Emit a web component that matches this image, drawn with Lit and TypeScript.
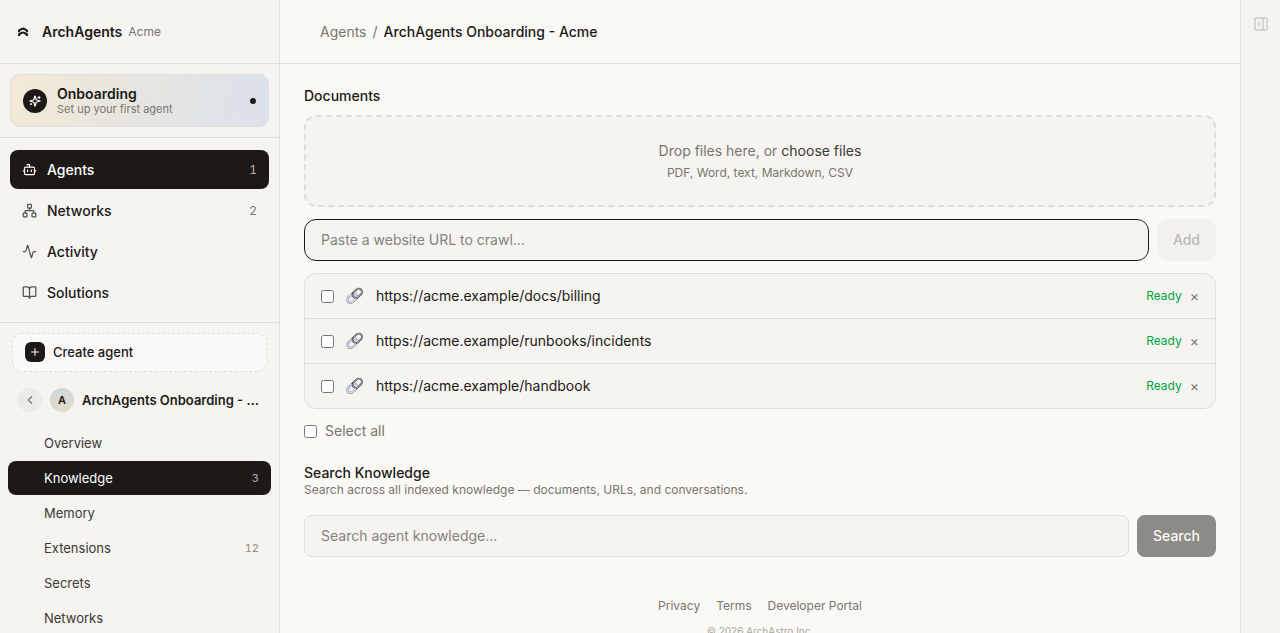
import { LitElement, html, css, svg, nothing, type TemplateResult } from "lit";
import { customElement, property } from "lit/decorators.js";
import { classMap } from "lit/directives/class-map.js";

interface NavItem {
  label: string;
  icon?: unknown;
  count?: number;
  active?: boolean;
}

const icons = {
  bot: svg`<path d="M12 8V4H8"/><rect width="16" height="12" x="4" y="8" rx="2"/><path d="M2 14h2M20 14h2M15 13v2M9 13v2"/>`,
  network: svg`<rect x="16" y="16" width="6" height="6" rx="1"/><rect x="2" y="16" width="6" height="6" rx="1"/><rect x="9" y="2" width="6" height="6" rx="1"/><path d="M5 16v-3a1 1 0 0 1 1-1h12a1 1 0 0 1 1 1v3M12 12V8"/>`,
  activity: svg`<path d="M22 12h-2.48a2 2 0 0 0-1.93 1.46l-2.35 8.36a.25.25 0 0 1-.48 0L9.24 2.18a.25.25 0 0 0-.48 0l-2.35 8.36A2 2 0 0 1 4.49 12H2"/>`,
  book: svg`<path d="M12 7v14"/><path d="M3 18a1 1 0 0 1-1-1V4a1 1 0 0 1 1-1h5a4 4 0 0 1 4 4 4 4 0 0 1 4-4h5a1 1 0 0 1 1 1v13a1 1 0 0 1-1 1h-6a3 3 0 0 0-3 3 3 3 0 0 0-3-3z"/>`,
  sparkles: svg`<path d="M9.937 15.5A2 2 0 0 0 8.5 14.063l-6.135-1.582a.5.5 0 0 1 0-.962L8.5 9.936A2 2 0 0 0 9.937 8.5l1.582-6.135a.5.5 0 0 1 .963 0L14.063 8.5A2 2 0 0 0 15.5 9.937l6.135 1.581a.5.5 0 0 1 0 .964L15.5 14.063a2 2 0 0 0-1.437 1.437l-1.582 6.135a.5.5 0 0 1-.963 0z"/><path d="M20 3v4M22 5h-4M4 17v2M5 18H3"/>`,
  plus: svg`<path d="M5 12h14M12 5v14"/>`,
  chevronLeft: svg`<path d="m15 18-6-6 6-6"/>`,
  panel: svg`<rect width="18" height="18" x="3" y="3" rx="2"/><path d="M15 3v18M10 9l-3 3 3 3"/>`,
};

const icon = (body: unknown, size: number, stroke = 2): TemplateResult => html`<svg
  width=${size} height=${size} viewBox="0 0 24 24" fill="none" stroke="currentColor"
  stroke-width=${stroke} stroke-linecap="round" stroke-linejoin="round" aria-hidden="true">${body}</svg>`;

const chain = (): TemplateResult => html`<svg width="20" height="20" viewBox="0 0 20 20" fill="none" aria-hidden="true">
  <g transform="rotate(-43 10 10)">
    <rect x="8.400" y="6.400" width="10.400" height="6.400" rx="3.200" stroke="#66636b" stroke-width="2.100"/>
    <rect x="8.600" y="6.400" width="10" height="6.200" rx="3.100" stroke="#a5a3ab" stroke-width="0.900"/>
    <rect x="1" y="6.400" width="10.800" height="6.400" rx="3.200" stroke="#7f8896" stroke-width="2.300"/>
    <rect x="1" y="6.300" width="10.600" height="6.300" rx="3.150" stroke="#d3e0ee" stroke-width="1.400"/>
    <path d="M8.800 6.400h2.600M9 12.600h1.500" stroke="#4c4a51" stroke-width="1.500"/>
  </g>
</svg>`;

const base = css`
  * { box-sizing: border-box; }
  svg { display: block; flex: none; }
  button, input { font: inherit; color: inherit; margin: 0; }
  button { border: 0; background: none; padding: 0; cursor: pointer; }
  a { color: inherit; text-decoration: none; }
  h2, p { margin: 0; }
`;

@customElement("app-sidebar")
export class AppSidebar extends LitElement {
  static styles = [base, css`
    :host {
      display: block;
      overflow: hidden;
      border-right: 1px solid #dededa;
      background: #f5f4f0;
    }
    .brand {
      display: flex;
      align-items: center;
      height: 64px;
      padding: 0 16px;
      border-bottom: 1px solid #dededa;
    }
    .brand-name { margin-left: 12px; font-weight: 600; }
    .brand-org { margin-left: 6px; font-size: 12px; color: #78756f; }
    .section { padding: 10px; border-bottom: 1px solid #dededa; }
    .onboarding {
      display: flex;
      align-items: center;
      gap: 10px;
      width: 100%;
      height: 53px;
      padding: 0 12px;
      border: 1px solid #dededa;
      border-radius: 10px;
      background: linear-gradient(100deg, #f3e9d6, #e5e5e1 55%, #dce2ed);
      text-align: left;
    }
    .onboarding-icon {
      display: grid;
      place-items: center;
      width: 24px;
      height: 24px;
      border-radius: 50%;
      background: #1c1917;
      color: #fff;
    }
    .onboarding-text { display: grid; flex: 1; }
    .onboarding-title { font-weight: 600; line-height: 17px; }
    .onboarding-sub { font-size: 11px; line-height: 14px; color: #78756f; }
    .dot { width: 6px; height: 6px; border-radius: 50%; background: #1c1917; }
    .nav { display: grid; gap: 2px; padding-top: 12px; }
    .nav-item {
      display: flex;
      align-items: center;
      gap: 10px;
      height: 39px;
      padding: 0 12px;
      border-radius: 8px;
      font-weight: 500;
    }
    .nav-item svg { color: #57534e; }
    .nav-item.active { background: #1c1917; color: #fff; }
    .nav-item.active svg { color: #fff; }
    .grow { flex: 1; }
    .count { font-size: 12px; font-weight: 400; color: #78756f; font-variant-numeric: tabular-nums; }
    .active .count { color: #b5b3b0; }
    .agent { padding: 10px 8px; }
    .create {
      display: flex;
      align-items: center;
      gap: 8px;
      width: calc(100% - 8px);
      height: 39px;
      margin: 0 4px;
      padding: 0 12px 1px;
      border: 1px dashed #dededa;
      border-radius: 10px;
      background: #faf9f7;
      font-size: 13px;
      font-weight: 500;
    }
    .create-icon {
      display: grid;
      place-items: center;
      width: 20px;
      height: 20px;
      border-radius: 6px;
      background: #1c1917;
      color: #fff;
    }
    .agent-head {
      display: flex;
      align-items: center;
      gap: 8px;
      padding: 16px 12px 14px 10px;
    }
    .back, .avatar {
      display: grid;
      place-items: center;
      flex: none;
      width: 24px;
      height: 24px;
      border-radius: 50%;
    }
    .back { background: #ebeae8; color: #78756f; }
    .avatar {
      background: linear-gradient(160deg, #cdd6df, #e6dcc2);
      font-size: 11px;
      font-weight: 600;
    }
    .agent-name {
      overflow: hidden;
      font-size: 13px;
      font-weight: 600;
      white-space: nowrap;
      text-overflow: ellipsis;
    }
    .subnav { display: grid; gap: 1px; }
    .subnav-item {
      display: flex;
      align-items: center;
      height: 34px;
      padding: 0 12px 0 36px;
      border-radius: 8px;
      font-size: 13px;
      color: #3b3835;
    }
    .subnav-item.active { background: #1c1917; color: #fff; }
    .subnav-item .count { font-size: 11px; color: #8f8c87; }
    .subnav-item.active .count { color: #b5b3b0; }
  `];

  @property({ attribute: false }) nav: NavItem[] = [
    { label: "Agents", icon: icons.bot, count: 1, active: true },
    { label: "Networks", icon: icons.network, count: 2 },
    { label: "Activity", icon: icons.activity },
    { label: "Solutions", icon: icons.book },
  ];

  @property({ attribute: false }) subnav: NavItem[] = [
    { label: "Overview" },
    { label: "Knowledge", count: 3, active: true },
    { label: "Memory" },
    { label: "Extensions", count: 12 },
    { label: "Secrets" },
    { label: "Networks" },
  ];

  private link(item: NavItem, name: string) {
    return html`<a href="#" class=${classMap({ [name]: true, active: !!item.active })}
      aria-current=${item.active ? "page" : nothing}>
      ${item.icon ? icon(item.icon, 15) : nothing}
      <span class="grow">${item.label}</span>
      ${item.count ? html`<span class="count">${item.count}</span>` : nothing}
    </a>`;
  }

  render() {
    return html`
      <div class="brand">
        <svg width="14" height="14" viewBox="0 0 14 14" fill="none" stroke="#1c1917" stroke-width="2.1" stroke-linejoin="round" aria-hidden="true">
          <path d="M3 7.200V6q0-.6.500-.9L6.400 3.700q.6-.3 1.200 0l2.900 1.400q.5.300.5.900v1.200M3 11.100V9.900q0-.6.500-.9l2.900-1.400q.6-.3 1.200 0L10.500 9q.5.300.5.900v1.200"/>
        </svg>
        <span class="brand-name">ArchAgents</span>
        <span class="brand-org">Acme</span>
      </div>
      <div class="section">
        <button class="onboarding">
          <span class="onboarding-icon">${icon(icons.sparkles, 12, 2.4)}</span>
          <span class="onboarding-text">
            <span class="onboarding-title">Onboarding</span>
            <span class="onboarding-sub">Set up your first agent</span>
          </span>
          <span class="dot"></span>
        </button>
      </div>
      <nav class="section nav" aria-label="Main">${this.nav.map((i) => this.link(i, "nav-item"))}</nav>
      <div class="agent">
        <button class="create"><span class="create-icon">${icon(icons.plus, 12)}</span>Create agent</button>
        <div class="agent-head">
          <button class="back" aria-label="Back">${icon(icons.chevronLeft, 14)}</button>
          <span class="avatar">A</span>
          <span class="agent-name">ArchAgents Onboarding - Acme</span>
        </div>
        <nav class="subnav" aria-label="Agent">${this.subnav.map((i) => this.link(i, "subnav-item"))}</nav>
      </div>
    `;
  }
}

@customElement("knowledge-page")
export class KnowledgePage extends LitElement {
  static styles = [base, css`
    :host { display: block; min-width: 0; overflow: hidden auto; scrollbar-width: none; }
    .crumbs {
      display: flex;
      align-items: center;
      gap: 6px;
      height: 64px;
      padding: 0 40px;
      border-bottom: 1px solid #dededa;
      color: #78756f;
    }
    .current { font-weight: 500; color: #1c1917; }
    .content { padding: 24px; }
    .title { font-size: 14px; font-weight: 500; line-height: 16px; }
    .drop {
      display: grid;
      justify-items: center;
      align-content: center;
      gap: 4px;
      height: 92px;
      margin: 11px 0 12px;
      border: 2px dashed #dededa;
      border-radius: 12px;
      background: #f5f4f0;
      color: #78756f;
      line-height: 20px;
    }
    .choose { color: #3b3835; }
    .hint { font-size: 12px; line-height: 16px; }
    .form { display: flex; gap: 8px; }
    .field {
      flex: 1;
      min-width: 0;
      height: 42px;
      padding: 0 16px 2px;
      border: 1px solid #dededa;
      border-radius: 8px;
      outline: 0;
      background: #f5f4f0;
    }
    .field::placeholder { color: #85827d; opacity: 1; }
    .field.url { border-color: #1c1917; border-radius: 12px; }
    .btn { padding: 0 16px; border-radius: 8px; font-weight: 500; }
    .add { border-radius: 12px; background: #f3f2ef; color: #bbb9b5; }
    .search { background: #8d8b88; color: #faf9f5; }
    .list {
      margin: 12px 0;
      padding: 0;
      list-style: none;
      border: 1px solid #dededa;
      border-radius: 12px;
      background: #f5f4f0;
    }
    .row { display: flex; align-items: center; height: 44px; padding: 0 16px; }
    .row + .row { height: 45px; border-top: 1px solid #dededa; }
    .row-label { display: flex; flex: 1; align-items: center; gap: 11px; }
    .check { width: 13px; height: 13px; }
    .ready { font-size: 12px; color: #00a63e; }
    .remove { margin-left: 8px; font-size: 14px; color: #78756f; }
    .all { display: flex; align-items: center; gap: 8px; width: max-content; line-height: 20px; color: #78756f; }
    .search-title { margin-top: 24px; }
    .desc { margin-bottom: 16px; font-size: 12px; line-height: 18px; color: #78756f; }
    .footer { padding: 16px 24px; font-size: 12px; text-align: center; color: #78756f; }
    .links { display: flex; justify-content: center; gap: 16px; line-height: 18px; }
    .copy { margin-top: 8px; font-size: 10px; line-height: 16px; color: #aaa8a3; }
  `];

  @property({ attribute: false }) urls = [
    "https://acme.example/docs/billing",
    "https://acme.example/runbooks/incidents",
    "https://acme.example/handbook",
  ];

  render() {
    return html`
      <nav class="crumbs" aria-label="Breadcrumb">
        <a href="#">Agents</a><span>/</span><span class="current">ArchAgents Onboarding - Acme</span>
      </nav>
      <main class="content">
        <h2 class="title">Documents</h2>
        <div class="drop">
          <div>Drop files here, or <button class="choose">choose files</button></div>
          <div class="hint">PDF, Word, text, Markdown, CSV</div>
        </div>
        <form class="form">
          <input class="field url" type="url" aria-label="Website URL" placeholder="Paste a website URL to crawl..." />
          <button class="btn add" type="button" disabled>Add</button>
        </form>
        <ul class="list">
          ${this.urls.map((url) => html`<li class="row">
            <label class="row-label">
              <input class="check" type="checkbox" />
              ${chain()}
              <span>${url}</span>
            </label>
            <span class="ready">Ready</span>
            <button class="remove" aria-label="Remove ${url}">×</button>
          </li>`)}
        </ul>
        <label class="all"><input class="check" type="checkbox" />Select all</label>
        <h2 class="title search-title">Search Knowledge</h2>
        <p class="desc">Search across all indexed knowledge — documents, URLs, and conversations.</p>
        <form class="form">
          <input class="field" type="search" aria-label="Search agent knowledge" placeholder="Search agent knowledge..." />
          <button class="btn search" type="button">Search</button>
        </form>
      </main>
      <footer class="footer">
        <div class="links"><a href="#">Privacy</a><a href="#">Terms</a><a href="#">Developer Portal</a></div>
        <p class="copy">© 2026 ArchAstro Inc.</p>
      </footer>
    `;
  }
}

@customElement("app-root")
export class AppRoot extends LitElement {
  static styles = [base, css`
    :host {
      display: grid;
      grid-template-columns: 280px minmax(0, 1fr) 40px;
      grid-template-rows: minmax(0, 1fr);
      height: 100vh;
      background: #faf9f5;
      color: #1c1917;
      font: 400 14px/20px Inter, sans-serif;
    }
    .rail {
      display: flex;
      justify-content: center;
      align-items: flex-start;
      padding-top: 16px;
      border-left: 1px solid #dededa;
      background: #f5f4f0;
    }
    .toggle { color: #c9c8c4; }
  `];

  render() {
    return html`
      <app-sidebar></app-sidebar>
      <knowledge-page></knowledge-page>
      <aside class="rail"><button class="toggle" aria-label="Open panel">${icon(icons.panel, 16)}</button></aside>
    `;
  }
}
